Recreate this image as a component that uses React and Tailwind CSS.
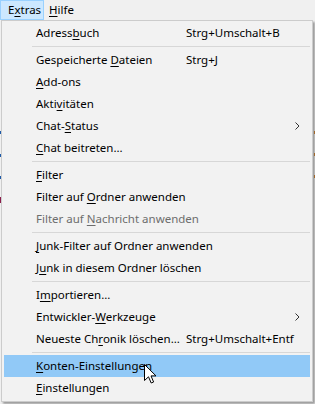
import React from "react";

// Menu entries; "u" = index of the underlined access key
const items = [
  { label: "Adressbuch", u: 6, shortcut: "Strg+Umschalt+B" },
  { sep: true },
  { label: "Gespeicherte Dateien", u: 13, shortcut: "Strg+J" },
  { label: "Add-ons", u: 0 },
  { label: "Aktivitäten", u: 4 },
  { label: "Chat-Status", u: 5, sub: true },
  { label: "Chat beitreten...", u: 0 },
  { sep: true },
  { label: "Filter", u: 0 },
  { label: "Filter auf Ordner anwenden", u: 11 },
  { label: "Filter auf Nachricht anwenden", u: 11, disabled: true },
  { sep: true },
  { label: "Junk-Filter auf Ordner anwenden", u: 0 },
  { label: "Junk in diesem Ordner löschen", u: 1 },
  { sep: true },
  { label: "Importieren...", u: 1 },
  { label: "Entwickler-Werkzeuge", u: 11, sub: true },
  { label: "Neueste Chronik löschen...", u: 10, shortcut: "Strg+Umschalt+Entf" },
  { sep: true },
  { label: "Konten-Einstellungen", u: 0, active: true },
  { label: "Einstellungen", u: 0 },
];

function AccessKey({ text, u }) {
  return (
    <>
      {text.slice(0, u)}
      <span className="underline underline-offset-[2px]">{text[u]}</span>
      {text.slice(u + 1)}
    </>
  );
}

function Chevron() {
  return (
    <svg width="5" height="8" viewBox="0 0 5 8" className="shrink-0">
      <path d="M0.5 0.5 L4 4 L0.5 7.5" fill="none" stroke="#333" strokeWidth="1" />
    </svg>
  );
}

function MenuItem({ item }) {
  if (item.sep) {
    return (
      <div className="h-[5px] flex items-center pl-[28px]">
        <div className="h-px w-full bg-[#d7d7d7]" />
      </div>
    );
  }
  return (
    <div
      className={`h-[22px] flex items-center pl-[32px] pr-[10px] ${
        item.active ? "bg-[#91c9f7]" : ""
      } ${item.disabled ? "text-[#6d6d6d]" : "text-black"}`}
    >
      <span className="w-[150px] shrink-0 whitespace-nowrap">
        <AccessKey text={item.label} u={item.u} />
      </span>
      <span className="flex-1 whitespace-nowrap">{item.shortcut}</span>
      {item.sub && <Chevron />}
    </div>
  );
}

export default function App() {
  return (
    <div className="relative w-[315px] h-[404px] overflow-hidden bg-[#f0f0f0] font-['Segoe_UI','Noto_Sans',sans-serif] text-[11.5px] leading-none">
      {/* Menu bar */}
      <div className="flex h-[20px] items-stretch text-black">
        <div className="flex items-center w-[44px] pl-[7px] bg-[#cce8ff] border border-[#99d1ff]">
          <span>
            E<span className="underline underline-offset-[2px]">x</span>tras
          </span>
        </div>
        <div className="flex items-center pl-[5px]">
          <span>
            <span className="underline underline-offset-[2px]">H</span>ilfe
          </span>
        </div>
      </div>

      {/* traces of the window below */}
      <div className="absolute left-0 top-[131px] w-px h-[3px] bg-[#1e5aa8]" />
      <div className="absolute left-0 top-[154px] w-px h-[3px] bg-[#1e5aa8]" />
      <div className="absolute left-0 top-[176px] w-px h-[3px] bg-[#1e5aa8]" />
      <div className="absolute left-0 top-[197px] w-px h-[6px] bg-[#8a1c4a]" />
      <div className="absolute right-0 top-[131px] w-px h-[3px] bg-[#a0672a]" />
      <div className="absolute right-0 top-[153px] w-px h-[3px] bg-[#a0672a]" />
      <div className="absolute right-0 top-[175px] w-px h-[3px] bg-[#a0672a]" />

      {/* Dropdown */}
      <div className="ml-[1px] w-[312px] border border-[#cccccc] bg-[#f2f2f2] px-[2px] pt-px pb-[2px] shadow-[2px_2px_2px_rgba(0,0,0,0.35)]">
        {items.map((item, i) => (
          <MenuItem key={i} item={item} />
        ))}
      </div>

      {/* Mouse cursor */}
      <svg
        width="13"
        height="21"
        viewBox="0 0 13 21"
        className="absolute left-[144px] top-[364px]"
      >
        <path
          d="M0.5 0.5 L0.5 16.5 L4.5 12.8 L7.2 19 L9.6 18 L7 11.9 L12 11.9 Z"
          fill="#fff"
          stroke="#000"
          strokeWidth="1"
          strokeLinejoin="miter"
        />
      </svg>
    </div>
  );
}
